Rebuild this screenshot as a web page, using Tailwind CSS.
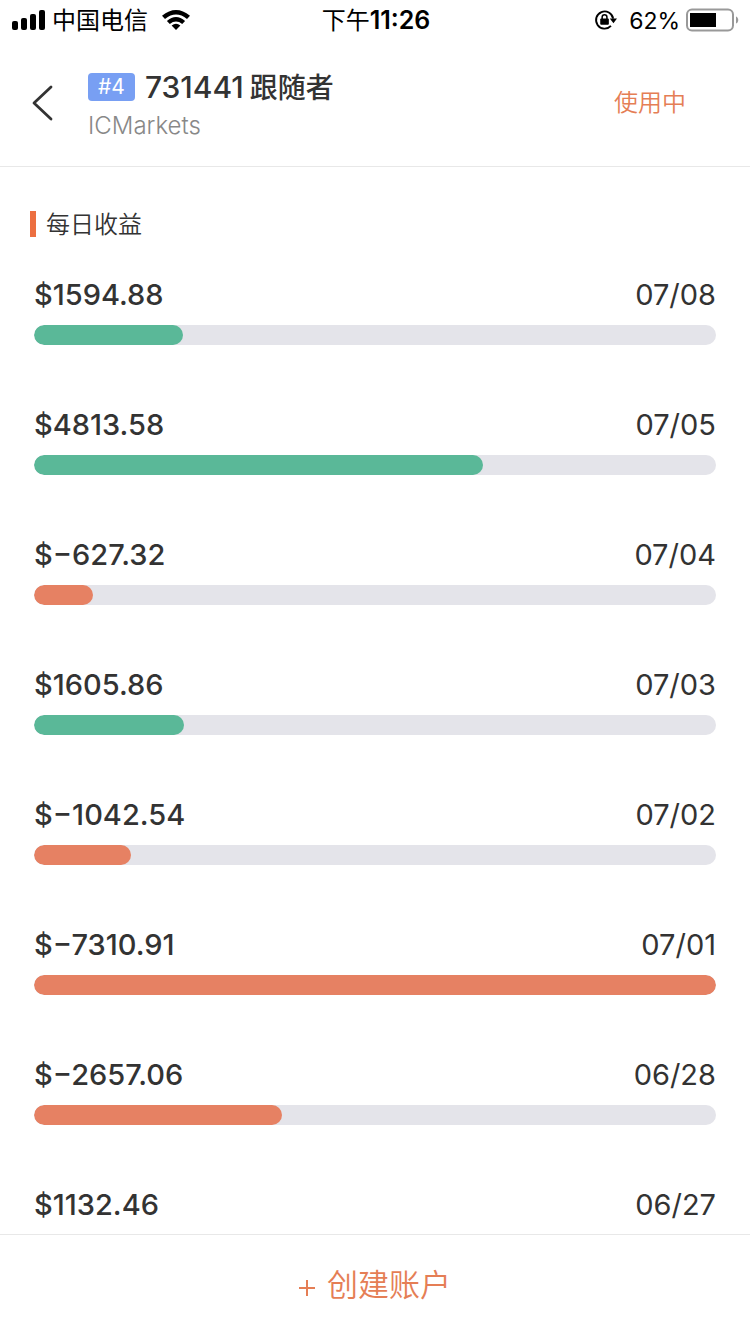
<!DOCTYPE html>
<html lang="zh-CN">
<head>
<meta charset="utf-8">
<meta name="viewport" content="width=device-width, initial-scale=1">
<title>每日收益</title>
<script src="https://cdn.jsdelivr.net/npm/@tailwindcss/browser@4"></script>
</head>
<body class="flex h-dvh flex-col overflow-hidden bg-white font-['Inter','Noto_Sans_CJK_SC',sans-serif] text-[#333333]">

<div class="grid h-10 shrink-0 grid-cols-3 items-center pl-3 pr-2.5 text-2xl text-black">
  <div class="flex items-center">
    <svg class="h-5 w-[34px]" viewBox="0 0 34 20" aria-hidden="true">
      <rect x="0" y="11" width="6" height="9" rx="2"/><rect x="9" y="8" width="6" height="12" rx="2"/><rect x="18" y="4" width="6" height="16" rx="2"/><rect x="27" y="0" width="6" height="20" rx="2"/>
    </svg>
    <span class="ml-1.5 pt-0.5">中国电信</span>
    <svg class="ml-3.5 h-5 w-7" viewBox="0 0 28 20" aria-hidden="true">
      <path d="M0 5.800Q14-5.800 28 5.800L25 8.900Q14 0 3 8.900Z"/>
      <path d="M4.900 10.900Q14 3.200 23.100 10.900L20.200 13.900Q14 9 7.800 13.900Z"/>
      <path d="M9.600 15.500Q14 12 18.400 15.500L14 20Z"/>
    </svg>
  </div>
  <div class="pt-0.5 text-center text-[25px] font-semibold"><span class="text-2xl font-normal">下午</span>11:26</div>
  <div class="flex items-center justify-end">
    <svg class="h-[22px] w-[23px]" viewBox="0 0 24 23" fill="none" aria-hidden="true">
      <path d="M17.700 17.700A9 9 0 1 1 20 10" stroke="#000" stroke-width="2"/>
      <path d="M16.500 10h7.500l-3.700 5Z" fill="#000"/>
      <rect x="6.500" y="10" width="9" height="6.500" rx="1" fill="#000"/>
      <path d="M8.500 11V8.500a2.500 2.500 0 0 1 5 0v2.500" stroke="#000" stroke-width="1.600"/>
    </svg>
    <span class="ml-3 pt-0.5 text-[23px]">62%</span>
    <svg class="ml-1.5 h-6 w-[54px]" viewBox="0 0 54 24" fill="none" aria-hidden="true">
      <rect x="1" y="1.500" width="46" height="21" rx="5" stroke="#999" stroke-width="2"/>
      <rect x="4" y="5" width="26" height="14" fill="#000"/>
      <path d="M50 8.500c3 1 3 6 0 7Z" fill="#999"/>
    </svg>
  </div>
</div>

<header class="flex h-[127px] shrink-0 items-center border-b border-[#e8e8e8] pl-8 pr-16">
  <button type="button" aria-label="返回" class="flex h-12 w-14 items-center">
    <svg class="h-9 w-[22px]" viewBox="0 0 22 36" fill="none" stroke="#333" stroke-width="2.800" stroke-linecap="round" stroke-linejoin="round" aria-hidden="true"><path d="M19 2 2 18l17 16"/></svg>
  </button>
  <div class="flex-1 pt-1">
    <div class="flex items-center gap-2.5">
      <span class="rounded bg-[#789ff3] px-2.5 text-[21px] leading-7 text-white">#4</span>
      <h1 class="flex items-center gap-1.5 text-[28px] leading-10 font-medium"><span class="text-[30px]">731441</span><span class="pt-0.5">跟随者</span></h1>
    </div>
    <p class="text-2xl leading-9 font-light text-[#888888]">ICMarkets</p>
  </div>
  <a href="#status" class="text-2xl font-[350] text-[#e57e55]">使用中</a>
</header>

<main class="min-h-0 flex-1 overflow-hidden pt-10">
  <h2 class="ml-[30px] flex items-center gap-2.5 text-2xl font-[350]"><span class="h-[26px] w-1.5 bg-[#ec6f41]"></span><span class="pt-0.5">每日收益</span></h2>
  <ul id="days" class="px-[34px] pt-[34px]"></ul>
</main>

<footer class="h-[100px] shrink-0 border-t border-[#e8e8e8]">
  <button type="button" class="flex h-full w-full items-center justify-center gap-3 pt-0.5 text-[31px] font-[350] text-[#e57e55]">
    <svg class="mt-1 h-4 w-4" viewBox="0 0 16 16" stroke="currentColor" stroke-width="2" aria-hidden="true"><path d="M8 0v16M0 8h16"/></svg>
    <span>创建账户</span>
  </button>
</footer>

<template id="day">
  <li class="h-[130px]">
    <div class="flex h-10 items-center justify-between text-[29px]">
      <span class="amount font-medium"></span><time></time>
    </div>
    <div role="progressbar" class="mt-2.5 h-5 overflow-hidden rounded-full bg-[#e4e4ea]">
      <div class="bar h-full rounded-full"></div>
    </div>
  </li>
</template>
<script>
const days = [
  [1594.88, '07/08'], [4813.58, '07/05'], [-627.32, '07/04'], [1605.86, '07/03'],
  [-1042.54, '07/02'], [-7310.91, '07/01'], [-2657.06, '06/28'], [1132.46, '06/27']
];
const max = Math.max(...days.map(([value]) => Math.abs(value)));
const template = document.getElementById('day');
for (const [value, date] of days) {
  const row = template.content.cloneNode(true);
  const share = Math.abs(value) / max * 100;
  row.querySelector('.amount').textContent = '$' + (value < 0 ? '−' : '') + Math.abs(value).toFixed(2);
  row.querySelector('time').textContent = date;
  const track = row.querySelector('[role=progressbar]');
  track.setAttribute('aria-label', date);
  track.setAttribute('aria-valuenow', Math.round(share));
  const bar = row.querySelector('.bar');
  bar.classList.add(value < 0 ? 'bg-[#e68163]' : 'bg-[#5ab898]');
  bar.style.width = share + '%';
  document.getElementById('days').append(row);
}
</script>
</body>
</html>
